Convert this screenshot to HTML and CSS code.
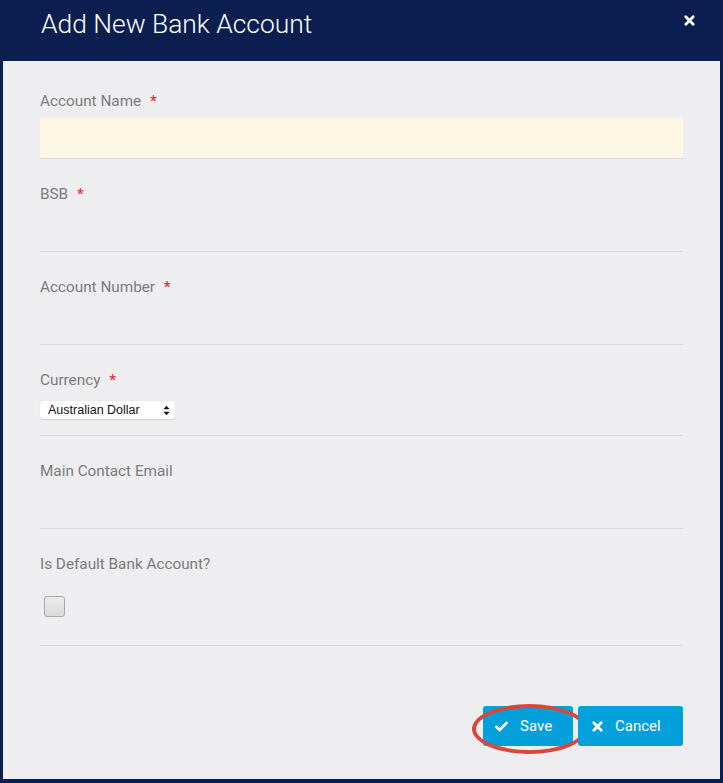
FILE: index.html
```html
<!DOCTYPE html>
<html>
<head>
<meta charset="utf-8">
<title>Add New Bank Account</title>
<link rel="stylesheet" href="styles.css">
</head>
<body>
<div class="modal">
  <header class="modal-header">
    <h1 class="modal-title">Add New Bank Account</h1>
    <button class="close" type="button" aria-label="Close">
      <svg viewBox="0 0 12 12" width="11" height="11"><path d="M2 2 L10 10 M10 2 L2 10" stroke="#fff" stroke-width="3" stroke-linecap="round"/></svg>
    </button>
  </header>
  <form class="modal-body">
    <div class="field">
      <label class="label">Account Name <span class="req">*</span></label>
      <input class="input input-active" type="text">
    </div>
    <div class="field">
      <label class="label">BSB <span class="req">*</span></label>
      <input class="input" type="text">
    </div>
    <div class="field">
      <label class="label">Account Number <span class="req">*</span></label>
      <input class="input" type="text">
    </div>
    <div class="field">
      <label class="label">Currency <span class="req">*</span></label>
      <div class="control control-select">
        <div class="select-wrap">
          <select class="select"><option>Australian Dollar</option></select>
          <svg class="select-arrows" viewBox="0 0 8 12" width="7" height="11"><path d="M4 0.5 L7.5 4.5 L0.5 4.5 Z M4 11.5 L7.5 7.5 L0.5 7.5 Z" fill="#111"/></svg>
        </div>
      </div>
    </div>
    <div class="field">
      <label class="label">Main Contact Email</label>
      <input class="input" type="email">
    </div>
    <div class="field">
      <label class="label">Is Default Bank Account?</label>
      <div class="control control-check">
        <input class="checkbox" type="checkbox">
      </div>
    </div>
    <div class="footer">
      <button class="btn btn-save" type="button">
        <svg viewBox="0 0 14 12" width="13" height="11"><path d="M1.5 6.5 L5 9.8 L12.5 2" stroke="#fff" stroke-width="3" fill="none" stroke-linecap="round" stroke-linejoin="round"/></svg>
        <span>Save</span>
        <span class="highlight"></span>
      </button>
      <button class="btn btn-cancel" type="button">
        <svg viewBox="0 0 12 12" width="11" height="11"><path d="M2 2 L10 10 M10 2 L2 10" stroke="#fff" stroke-width="3" stroke-linecap="round"/></svg>
        <span>Cancel</span>
      </button>
    </div>
  </form>
</div>
</body>
</html>
```
FILE: styles.css
```css
* { box-sizing: border-box; }
html, body { margin: 0; padding: 0; }
body {
  background: #0a1e50;
  font-family: Roboto, "Liberation Sans", sans-serif;
  width: 723px;
  height: 783px;
  overflow: hidden;
}
.modal { display: flex; flex-direction: column; }
.modal-header {
  height: 61px;
  padding: 9px 28px 0 41px;
  display: flex;
  justify-content: space-between;
  align-items: flex-start;
}
.modal-title {
  margin: 0;
  font-size: 26.4px;
  line-height: 30px;
  font-weight: 300;
  color: #fff;
}
.close {
  background: none;
  border: 0;
  padding: 0;
  margin-top: 6px;
  width: 11px;
  height: 11px;
  display: block;
}
.close svg { display: block; }
.modal-body {
  margin: 0 3px;
  background: #eeeef0;
  padding: 5px 37px 33px;
  display: flex;
  flex-direction: column;
}
.field {
  padding-top: 25px;
  display: flex;
  flex-direction: column;
}
.label {
  font-size: 15.3px;
  line-height: 20px;
  color: #7b7b7d;
  margin-bottom: 7px;
}
.req { color: #ee2b30; margin-left: 5px; font-weight: 500; }
.input {
  height: 41px;
  border: 0;
  border-bottom: 1px solid #d6dade;
  background: transparent;
  font: inherit;
  margin: 0;
  padding: 0 10px;
  outline: none;
}
.input-active { background: #fdf7e4; }
.control {
  height: 41px;
  border-bottom: 1px solid #d6dade;
  padding-top: 5px;
}
.control-select { height: 39px; padding-top: 4px; }
.select-wrap {
  position: relative;
  width: 135px;
  height: 18px;
}
.select {
  -webkit-appearance: none;
  appearance: none;
  width: 135px;
  height: 18px;
  border: 0;
  border-radius: 4px;
  background: #fff;
  box-shadow: 0 0.5px 1px rgba(0,0,0,0.12);
  font-family: "Liberation Sans", Arial, sans-serif;
  font-size: 12.5px;
  color: #111;
  padding: 0 0 0 8px;
  margin: 0;
  outline: none;
  display: block;
}
.select-arrows {
  position: absolute;
  right: 5px;
  top: 3.5px;
  pointer-events: none;
}
.control-check {
  height: 65px;
  padding-top: 15px;
  padding-left: 4px;
}
.checkbox {
  -webkit-appearance: none;
  appearance: none;
  width: 21px;
  height: 21px;
  margin: 0;
  border: 1px solid #a9a9ab;
  border-radius: 3px;
  background: linear-gradient(#ececec, #dadada);
  display: block;
}
.footer {
  display: flex;
  justify-content: flex-end;
  gap: 5px;
  margin-top: 60px;
}
.btn {
  position: relative;
  height: 40px;
  border: 0;
  border-radius: 3px;
  background: #03a0dc;
  color: #fff;
  font-family: Roboto, "Liberation Sans", sans-serif;
  font-size: 15px;
  display: flex;
  align-items: center;
  padding: 0 0 0 12px;
  gap: 12px;
}
.btn svg { display: block; }
.btn-save { width: 90px; }
.btn-cancel { width: 105px; padding-left: 14px; gap: 12px; }
.highlight {
  position: absolute;
  left: -11px;
  top: -2px;
  width: 115px;
  height: 50px;
  border: 4px solid #d8473f;
  border-radius: 50%;
  pointer-events: none;
}
```
